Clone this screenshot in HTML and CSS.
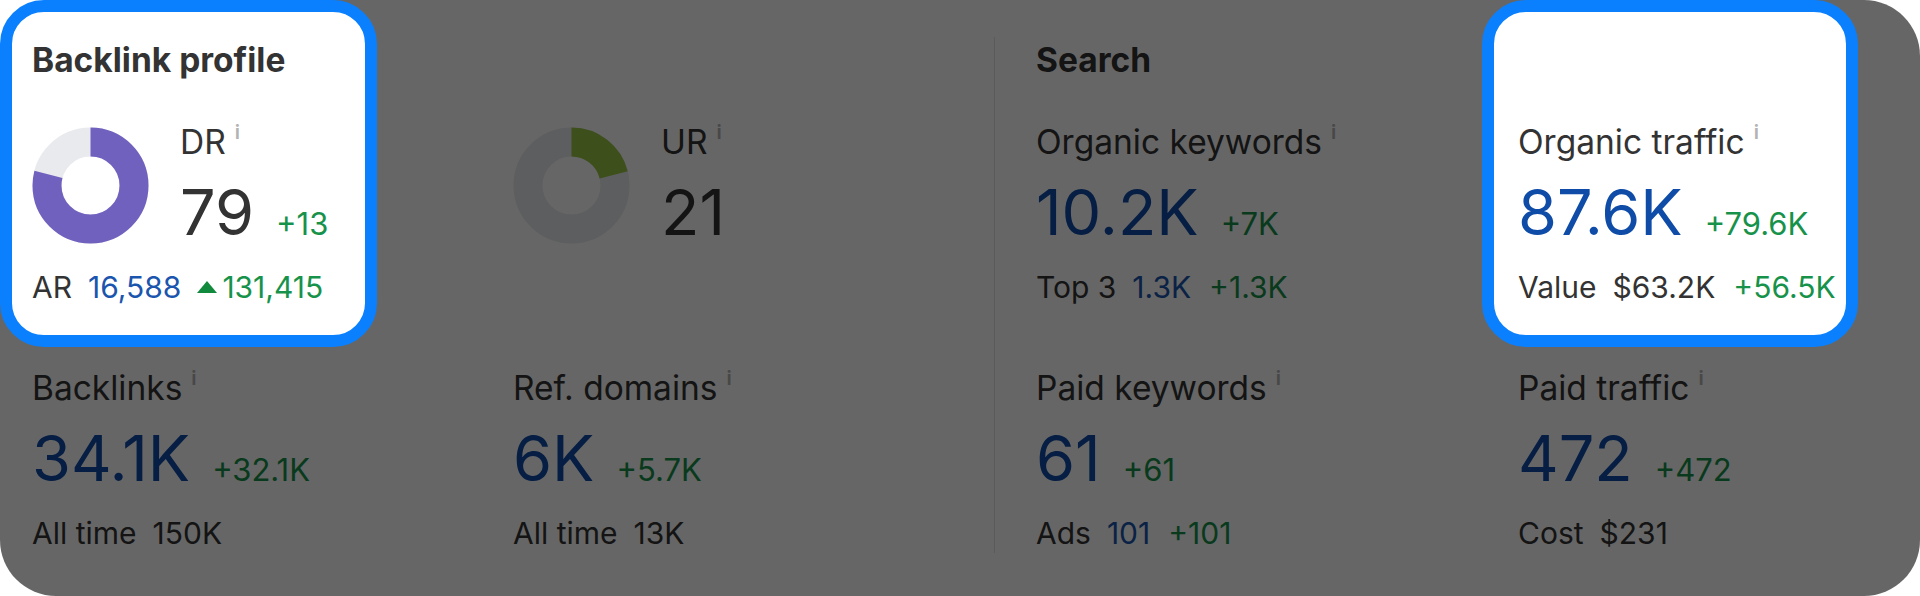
FILE: index.html
```html
<!DOCTYPE html>
<html lang="en">
<head>
<meta charset="utf-8">
<title>Overview</title>
<link rel="stylesheet" href="styles.css">
</head>
<body>
<div class="screen">
  <div class="board">
    <section class="group group-links">
      <h2 class="group-title lit">Backlink profile</h2>
      <div class="title-empty"></div>

      <div class="metric lit">
        <div class="rating-row">
          <svg class="donut" viewBox="0 0 117 117" width="117" height="117">
            <circle cx="58.5" cy="58.5" r="43.5" fill="none" stroke="#e9eaed" stroke-width="29"/>
            <circle cx="58.5" cy="58.5" r="43.5" fill="none" stroke="#7161be" stroke-width="29" stroke-dasharray="215.9 400" transform="rotate(-90 58.5 58.5)"/>
          </svg>
          <div class="metric-main">
            <div class="metric-label">DR<span class="info">i</span></div>
            <div class="metric-value"><span class="num num-plain">79</span><span class="delta">+13</span></div>
          </div>
        </div>
        <div class="metric-sub">
          <span>AR</span>
          <span class="blue">16,588</span>
          <span class="green up"><span class="tri"></span>131,415</span>
        </div>
      </div>

      <div class="metric">
        <div class="rating-row">
          <svg class="donut" viewBox="0 0 117 117" width="117" height="117">
            <circle cx="58.5" cy="58.5" r="43.5" fill="none" stroke="#e9eaed" stroke-width="29"/>
            <circle cx="58.5" cy="58.5" r="43.5" fill="none" stroke="#98c641" stroke-width="29" stroke-dasharray="57.4 400" transform="rotate(-90 58.5 58.5)"/>
          </svg>
          <div class="metric-main">
            <div class="metric-label">UR<span class="info">i</span></div>
            <div class="metric-value"><span class="num num-plain">21</span></div>
          </div>
        </div>
      </div>

      <div class="metric">
        <div class="metric-label">Backlinks<span class="info">i</span></div>
        <div class="metric-value"><span class="num">34.1K</span><span class="delta">+32.1K</span></div>
        <div class="metric-sub"><span>All time</span><span>150K</span></div>
      </div>

      <div class="metric">
        <div class="metric-label">Ref. domains<span class="info">i</span></div>
        <div class="metric-value"><span class="num">6K</span><span class="delta">+5.7K</span></div>
        <div class="metric-sub"><span>All time</span><span>13K</span></div>
      </div>
    </section>

    <section class="group group-search">
      <h2 class="group-title">Search</h2>
      <div class="title-empty"></div>

      <div class="metric">
        <div class="metric-label">Organic keywords<span class="info">i</span></div>
        <div class="metric-value"><span class="num">10.2K</span><span class="delta">+7K</span></div>
        <div class="metric-sub"><span>Top 3</span><span class="blue">1.3K</span><span class="green">+1.3K</span></div>
      </div>

      <div class="metric lit">
        <div class="metric-label">Organic traffic<span class="info">i</span></div>
        <div class="metric-value"><span class="num">87.6K</span><span class="delta">+79.6K</span></div>
        <div class="metric-sub"><span>Value</span><span>$63.2K</span><span class="green">+56.5K</span></div>
      </div>

      <div class="metric">
        <div class="metric-label">Paid keywords<span class="info">i</span></div>
        <div class="metric-value"><span class="num">61</span><span class="delta">+61</span></div>
        <div class="metric-sub"><span>Ads</span><span class="blue">101</span><span class="green">+101</span></div>
      </div>

      <div class="metric">
        <div class="metric-label">Paid traffic<span class="info">i</span></div>
        <div class="metric-value"><span class="num">472</span><span class="delta">+472</span></div>
        <div class="metric-sub"><span>Cost</span><span>$231</span></div>
      </div>
    </section>
  </div>

  <div class="dim"></div>
  <div class="spot spot-backlinks"></div>
  <div class="spot spot-traffic"></div>
</div>
</body>
</html>
```
FILE: styles.css
```css
html, body {
  margin: 0;
  padding: 0;
  background: #ffffff;
}

.screen {
  position: relative;
  z-index: 0;
  width: 1920px;
  height: 596px;
  overflow: hidden;
  font-family: Inter, "Noto Sans", "Liberation Sans", sans-serif;
  color: #333333;
}

.board {
  display: flex;
  padding: 37px 0 0 32px;
}

.group {
  display: grid;
  grid-template-columns: 481px 481px;
  grid-template-rows: 82px 246px auto;
  padding: 3px 0 2px 0;
}

.group-links {
  border-right: 1px solid #e4e4e4;
}

.group-search {
  padding-left: 41px;
  grid-template-columns: 482px 482px;
}

.group-title {
  margin: 0;
  font-size: 33.5px;
  line-height: 40px;
  font-weight: 700;
  color: #333333;
  align-self: start;
}

.metric {
  display: flex;
  flex-direction: column;
  align-items: flex-start;
}

.rating-row {
  display: flex;
  align-items: center;
  gap: 31px;
}

.donut {
  display: block;
  flex: none;
}

.metric-main {
  display: flex;
  flex-direction: column;
}

.metric-label {
  font-size: 33.5px;
  line-height: 40px;
  color: #333333;
  white-space: nowrap;
}

.info {
  display: inline-block;
  margin-left: 9px;
  font-size: 20px;
  line-height: 20px;
  font-weight: 600;
  color: #b3b3b3;
  vertical-align: 15px;
}

.metric-value {
  display: flex;
  align-items: baseline;
  gap: 22px;
  margin-top: 14px;
  white-space: nowrap;
}

.num {
  font-size: 63px;
  line-height: 72px;
  color: #0f4ca8;
}

.num-plain {
  color: #333333;
}

.delta {
  font-size: 31px;
  color: #17924a;
}

.metric-sub {
  display: flex;
  align-items: baseline;
  gap: 16px;
  margin-top: 21px;
  font-size: 30px;
  line-height: 36px;
  color: #333333;
  white-space: nowrap;
}

.blue {
  color: #1b55ad;
}

.green {
  color: #17924a;
  margin-left: 2px;
}

.up {
  display: inline-flex;
  align-items: baseline;
  margin-left: 0;
}

.tri {
  display: inline-block;
  width: 0;
  height: 0;
  border-left: 10px solid transparent;
  border-right: 10px solid transparent;
  border-bottom: 12px solid #128a3e;
  margin-right: 5px;
  align-self: center;
}

.dim {
  position: absolute;
  inset: 0;
  z-index: 1;
  background: rgba(0, 0, 0, 0.6);
  border-radius: 56px;
}

.spot {
  position: absolute;
  top: 0;
  z-index: 2;
  box-sizing: border-box;
  height: 347px;
  background: #ffffff;
  border: 12px solid #0a80ff;
  border-radius: 44px;
}

.spot-backlinks {
  left: 0;
  width: 377px;
}

.spot-traffic {
  left: 1482px;
  width: 376px;
}

.lit {
  position: relative;
  z-index: 3;
}
```
